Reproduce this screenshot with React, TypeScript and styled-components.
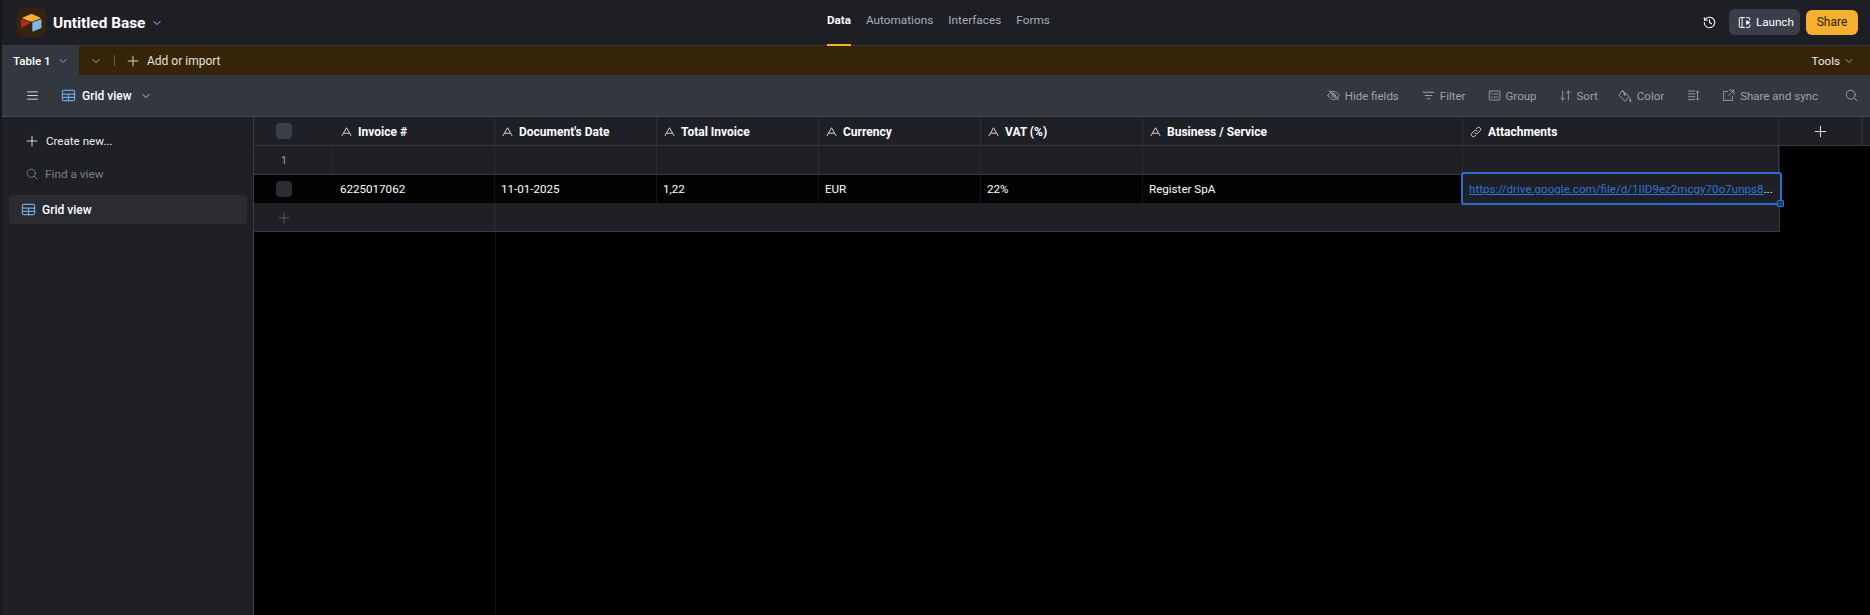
import React from "react";
import styled, { createGlobalStyle } from "styled-components";

const Global = createGlobalStyle`
  html, body { margin: 0; padding: 0; height: 100%; background: #000; }
  #root { height: 100%; }
  * { box-sizing: border-box; }
  body { font-family: Roboto, "Noto Sans", "Liberation Sans", sans-serif; font-size: 13px; color: #fff; overflow: hidden; }
`;

const Page = styled.div`
  width: 1870px;
  height: 615px;
  display: flex;
  flex-direction: column;
  background: #17181c;
  padding-left: 2px;
`;

const TopBar = styled.header`
  height: 46px;
  flex: none;
  display: flex;
  align-items: stretch;
  background: #1d1f25;
  border-bottom: 1px solid #37393f;
  padding: 0 12px 0 15px;
`;
const Brand = styled.div`
  display: flex;
  align-items: center;
  width: 810px;
`;
const LogoBox = styled.div`
  width: 29px;
  height: 29px;
  border-radius: 6px;
  background: #35240b;
  display: flex;
  align-items: center;
  justify-content: center;
`;
const BaseName = styled.span`
  font-size: 15.4px;
  font-weight: 700;
  margin-left: 7px;
`;
const BrandChevron = styled.span`
  display: flex;
  margin-left: 7px;
  color: #d5d7dc;
`;
const Nav = styled.nav`
  display: flex;
  gap: 15px;
`;
const NavItem = styled.a<{ $active?: boolean }>`
  display: flex;
  align-items: center;
  height: 46px;
  padding-bottom: 4px;
  font-size: ${(p) => (p.$active ? "11.6px" : "11.8px")};
  font-weight: ${(p) => (p.$active ? 700 : 400)};
  color: ${(p) => (p.$active ? "#ffffff" : "#a5adbc")};
  border-bottom: 2px solid ${(p) => (p.$active ? "#f5b02f" : "transparent")};
`;
const TopActions = styled.div`
  flex: 1;
  display: flex;
  align-items: center;
  justify-content: flex-end;
  padding-bottom: 1px;
`;
const HistoryBtn = styled.span`
  display: flex;
  color: #fff;
  margin-right: 13px;
`;
const LaunchBtn = styled.button`
  display: flex;
  align-items: center;
  gap: 5px;
  width: 71px;
  height: 26px;
  padding: 0 0 0 9px;
  border: 0;
  border-radius: 6px;
  background: #3b3e4a;
  color: #fff;
  font: 400 11.6px Roboto, sans-serif;
  margin-right: 6px;
`;
const ShareBtn = styled.button`
  width: 52px;
  height: 25px;
  border: 0;
  border-radius: 6px;
  background: #f5b02f;
  color: #2b1d05;
  font: 400 12px Roboto, sans-serif;
  padding: 0;
`;

const TabBar = styled.div`
  height: 29px;
  flex: none;
  display: flex;
  align-items: center;
  background: #352407;
  padding-right: 16px;
`;
const ActiveTab = styled.div`
  width: 77px;
  height: 29px;
  background: #333740;
  display: flex;
  align-items: center;
  padding-left: 11px;
  gap: 7px;
  font-size: 11.6px;
  font-weight: 500;
`;
const DimChevron = styled.span`
  display: flex;
  color: #a8abb3;
`;
const TabMore = styled.span`
  display: flex;
  margin-left: 12px;
  color: #c9c4ba;
`;
const TabDivider = styled.span`
  width: 1px;
  height: 11px;
  background: #6a5c44;
  margin: 0 12px 0 13px;
`;
const AddImport = styled.div`
  display: flex;
  align-items: center;
  gap: 8px;
  font-size: 12px;
  color: #e8e3da;
`;
const Tools = styled.div`
  margin-left: auto;
  display: flex;
  align-items: center;
  gap: 4px;
  font-size: 11.6px;
  color: #f0ece4;
`;

const ViewBar = styled.div`
  height: 42px;
  flex: none;
  display: flex;
  align-items: center;
  background: #333740;
  border-bottom: 1px solid #474a52;
  padding: 0 12px 0 24px;
`;
const Hamburger = styled.span`
  display: flex;
  color: #d5d7dc;
`;
const ViewName = styled.div`
  display: flex;
  align-items: center;
  margin-left: 22px;
  font-size: 12px;
  font-weight: 500;
  gap: 6px;
`;
const ViewChevron = styled.span`
  display: flex;
  margin-left: 9px;
  color: #d5d7dc;
`;
const Tool = styled.div<{ $gap?: number }>`
  display: flex;
  align-items: center;
  gap: 5px;
  font-size: 11.5px;
  color: #9aa3b3;
  margin-left: ${(p) => p.$gap ?? 22}px;
`;
const ToolSpacer = styled.div`
  flex: 1;
`;

const Main = styled.div`
  flex: 1;
  min-height: 0;
  display: flex;
`;
const Sidebar = styled.aside`
  width: 252px;
  flex: none;
  background: #1e2025;
  border-right: 1px solid #3a3c42;
  padding: 0 6px 0 7px;
  display: flex;
  flex-direction: column;
`;
const CreateNew = styled.div`
  height: 48px;
  display: flex;
  align-items: center;
  gap: 8px;
  padding-left: 17px;
  font-size: 11.6px;
  color: #eceef2;
`;
const FindView = styled.div`
  height: 18px;
  display: flex;
  align-items: center;
  gap: 7px;
  padding-left: 17px;
  font-size: 11.8px;
  color: #7d7f86;
`;
const ViewRow = styled.div`
  height: 29px;
  margin-top: 12px;
  display: flex;
  align-items: center;
  gap: 6px;
  padding-left: 12px;
  border-radius: 4px;
  background: #2a2c32;
  font-size: 12px;
  font-weight: 500;
`;

const GridArea = styled.section`
  flex: 1;
  min-width: 0;
  background: #000;
  display: flex;
  flex-direction: column;
  position: relative;
`;
const columns = "79px 162px 162px 162px 162px 162px 320px 316px";
const HeaderRow = styled.div`
  height: 29px;
  flex: none;
  display: grid;
  grid-template-columns: 79px 162px 162px 162px 162px 162px 320px 316px 84px 1fr;
  background: #1e2026;
  border-bottom: 1px solid #37393f;
`;
const HeadBox = styled.div`
  display: flex;
  align-items: center;
  padding-left: 22px;
`;
const HeadCell = styled.div<{ $indent?: number }>`
  display: flex;
  align-items: center;
  gap: 6px;
  padding: 1px 0 0 ${(p) => p.$indent ?? 7}px;
  font-size: 12px;
  font-weight: 700;
  border-right: 1px solid #2d2f35;
`;
const Check = styled.span<{ $dark?: boolean }>`
  width: 16px;
  height: 16px;
  border-radius: 4px;
  background: ${(p) => (p.$dark ? "#2c2d33" : "#3a3e4a")};
`;
const AddColumn = styled.div`
  display: flex;
  align-items: center;
  justify-content: center;
  color: #e6e7ea;
  border-right: 2px solid #2d2f35;
`;
const Body = styled.div`
  flex: none;
  width: 1526px;
`;
const Row = styled.div<{ $dark?: boolean }>`
  height: 29px;
  display: grid;
  grid-template-columns: ${columns};
  background: ${(p) => (p.$dark ? "#030303" : "#1e2026")};
  border-bottom: 1px solid ${(p) => (p.$dark ? "#1e2026" : "#37393f")};
`;
const Cell = styled.div<{ $dark?: boolean; $indent?: number }>`
  display: flex;
  align-items: center;
  padding-left: ${(p) => p.$indent ?? 6}px;
  font-size: 11.6px;
  font-weight: 400;
  color: #fff;
  white-space: nowrap;
  border-right: 1px solid ${(p) => (p.$dark ? "#131417" : "#2a2c31")};
`;
const RowNum = styled(Cell)`
  padding: 0 0 0 27px;
  font-size: 10.5px;
  color: #a5a7ac;
`;
const LastCell = styled(Cell)`
  border-right: 1px solid #37393f;
`;
const AddRow = styled.div`
  height: 28px;
  display: grid;
  grid-template-columns: 241px 1fr;
  background: #1e2026;
  border-bottom: 1px solid #37393f;
  border-right: 1px solid #37393f;
`;
const AddCell = styled.div`
  display: flex;
  align-items: center;
  padding-left: 24px;
  color: #5b5d63;
  border-right: 1px solid #2d2f35;
`;
const FrozenRest = styled.div`
  flex: 1;
  width: 242px;
  border-right: 1px solid #101114;
`;
const ActiveCell = styled.div`
  position: absolute;
  left: 1207px;
  top: 55px;
  width: 321px;
  height: 33px;
  border: 2px solid #2d6cce;
  border-radius: 3px;
  background: #1e2026;
  display: flex;
  align-items: center;
  padding-left: 6px;
  font-size: 11.6px;
  font-weight: 400;
`;
const CellLink = styled.a`
  color: #2f72d8;
  text-decoration: underline;
  white-space: nowrap;
`;
const Ellipsis = styled.span`
  color: #fff;
`;
const Handle = styled.span`
  position: absolute;
  right: -4px;
  bottom: -4px;
  width: 7px;
  height: 7px;
  border: 1px solid #2d6cce;
  border-radius: 1px;
  background: #1e3a66;
`;

type IconProps = { size?: number; color?: string; sw?: number; children: React.ReactNode };
const Svg = ({ size = 16, color = "currentColor", sw = 1.2, children }: IconProps) => (
  <svg width={size} height={size} viewBox="0 0 16 16" fill="none" stroke={color} strokeWidth={sw} strokeLinecap="round" strokeLinejoin="round" style={{ display: "block", flex: "none" }}>
    {children}
  </svg>
);
const Chevron = ({ size = 12 }: { size?: number }) => (
  <Svg size={size} sw={1.4}><path d="M3 5.5 L8 10.5 L13 5.5" /></Svg>
);
const Plus = ({ size = 14 }: { size?: number }) => (
  <Svg size={size} sw={1.2}><path d="M8 1.5 V14.5 M1.5 8 H14.5" /></Svg>
);
const GridIcon = ({ size = 15 }: { size?: number }) => (
  <Svg size={size} color="#6fa8dc" sw={1.2}>
    <rect x="1.5" y="2.5" width="13" height="11" rx="1.5" />
    <path d="M1.5 6.5 H14.5 M1.5 10 H14.5 M8 6.5 V13.5" />
  </Svg>
);
const TextIcon = () => (
  <Svg size={11} color="#e8e9ec" sw={1.3}><path d="M1.5 14 L8 2.5 L14.5 14 M4.5 10.5 H11.5" /></Svg>
);
const LinkIcon = () => (
  <Svg size={12} color="#d0d2d6" sw={1.2}>
    <path d="M6.5 9.5 a2.8 2.8 0 0 0 4 0 l3 -3 a2.8 2.8 0 0 0 -4 -4 l-1.2 1.2" />
    <path d="M9.5 6.5 a2.8 2.8 0 0 0 -4 0 l-3 3 a2.8 2.8 0 0 0 4 4 l1.2 -1.2" />
  </Svg>
);
const SearchIcon = ({ size = 13 }: { size?: number }) => (
  <Svg size={size} sw={1.2}><circle cx="7" cy="7" r="5.5" /><path d="M11 11 L14.5 14.5" /></Svg>
);
const Logo = () => (
  <svg width="21" height="18" viewBox="0 0 200 170" style={{ display: "block" }}>
    <path fill="#f5b02f" d="M90 2 L18 32 c-4 2 -4 7 0 9 L90 70 c6 2 14 2 20 0 L182 41 c4 -2 4 -7 0 -9 L110 2 c-6 -3 -14 -3 -20 0z" />
    <path fill="#7db9ea" d="M108 85 V160 c0 4 4 7 8 5 L190 136 c3 -1 5 -4 5 -7 V55 c0 -4 -4 -7 -8 -5 L113 78 c-3 1 -5 4 -5 7z" />
    <path fill="#b02a2a" d="M90 88 L66 100 L10 128 c-4 2 -10 -1 -10 -5 V52 c0 -2 1 -3 2 -4 c1 -1 3 -1 4 0 L90 80 c3 2 3 6 0 8z" />
  </svg>
);

const headers = ["Document's Date", "Total Invoice", "Currency", "VAT (%)", "Business / Service"];

export default function App() {
  return (
    <Page>
      <Global />
      <TopBar>
        <Brand>
          <LogoBox><Logo /></LogoBox>
          <BaseName>Untitled Base</BaseName>
          <BrandChevron><Chevron size={10} /></BrandChevron>
        </Brand>
        <Nav>
          <NavItem $active>Data</NavItem>
          <NavItem>Automations</NavItem>
          <NavItem>Interfaces</NavItem>
          <NavItem>Forms</NavItem>
        </Nav>
        <TopActions>
          <HistoryBtn>
            <Svg size={13} sw={1.3}>
              <path d="M2.2 5 A6.5 6.5 0 1 1 1.5 8" />
              <path d="M1.5 2 L2 5.2 L5.2 5" />
              <path d="M8 4.5 V8 L10.5 9.5" />
            </Svg>
          </HistoryBtn>
          <LaunchBtn>
            <Svg size={13} sw={1.2}>
              <path d="M8 2 H2.5 A1 1 0 0 0 1.5 3 V13 A1 1 0 0 0 2.5 14 H8" />
              <path d="M5 2 V14 M10.5 2 H13.5 A1 1 0 0 1 14.5 3 V5 M14.5 11 V13 A1 1 0 0 1 13.5 14 H10.5" />
              <path d="M11 6 L14.5 8 L11 10 Z" fill="#fff" />
            </Svg>
            Launch
          </LaunchBtn>
          <ShareBtn>Share</ShareBtn>
        </TopActions>
      </TopBar>

      <TabBar>
        <ActiveTab>Table 1<DimChevron><Chevron size={10} /></DimChevron></ActiveTab>
        <TabMore><Chevron size={10} /></TabMore>
        <TabDivider />
        <AddImport><Plus size={12} />Add or import</AddImport>
        <Tools>Tools<DimChevron><Chevron size={10} /></DimChevron></Tools>
      </TabBar>

      <ViewBar>
        <Hamburger>
          <Svg size={13} sw={1.2}><path d="M2 3.5 H14 M2 8 H14 M2 12.5 H14" /></Svg>
        </Hamburger>
        <ViewName>
          <GridIcon />
          Grid view
        </ViewName>
        <ViewChevron><Chevron size={10} /></ViewChevron>
        <ToolSpacer />
        <Tool>
          <Svg size={13} sw={1.1}>
            <path d="M1 8 C3 4.5 5.5 3 8 3 C10.5 3 13 4.5 15 8 C13 11.5 10.5 13 8 13 C5.5 13 3 11.5 1 8z" />
            <circle cx="8" cy="8" r="2.3" />
            <path d="M2.5 2.5 L13.5 13.5 M4 2 L14.5 12.5" />
          </Svg>
          Hide fields
        </Tool>
        <Tool $gap={23}>
          <Svg size={13} sw={1.2}><path d="M1.5 4 H14.5 M4 8 H12 M6.5 12 H9.5" /></Svg>
          Filter
        </Tool>
        <Tool $gap={22}>
          <Svg size={13} sw={1.1}>
            <rect x="1.5" y="2.5" width="13" height="11" rx="1" />
            <path d="M4 6 H5 M7 6 H12 M4 10 H5 M7 10 H12" />
          </Svg>
          Group
        </Tool>
        <Tool $gap={22}>
          <Svg size={13} sw={1.1}>
            <path d="M4.5 2.5 V13.5 M2 11 L4.5 13.5 L7 11" />
            <path d="M11.5 13.5 V2.5 M9 5 L11.5 2.5 L14 5" />
          </Svg>
          Sort
        </Tool>
        <Tool $gap={20}>
          <Svg size={14} sw={1.1}>
            <path d="M5.5 2 L13 9 L8 14 L1.5 7.5 Z" />
            <path d="M5 1.5 L7.5 6" />
            <circle cx="7.5" cy="6.5" r="0.8" />
            <path d="M14 11.5 C13 13 13 14.2 14 14.5 C15 14.2 15 13 14 11.5z" />
          </Svg>
          Color
        </Tool>
        <Tool $gap={23}>
          <Svg size={13} sw={1.1}>
            <path d="M1.5 2.5 H9.5 M1.5 6 H9.5 M1.5 9.5 H9.5 M1.5 13 H9.5" />
            <path d="M13 2.5 V13.5 M11.5 4 L13 2.5 L14.5 4 M11.5 12 L13 13.5 L14.5 12" />
          </Svg>
        </Tool>
        <Tool $gap={22}>
          <Svg size={13} sw={1.1}>
            <path d="M7 3 H2 V14 H13 V9" />
            <path d="M9.5 1.5 H14.5 V6.5 M14.5 1.5 L8 8" />
          </Svg>
          Share and sync
        </Tool>
        <Tool $gap={27}><SearchIcon /></Tool>
      </ViewBar>

      <Main>
        <Sidebar>
          <CreateNew><Plus size={12} />Create new...</CreateNew>
          <FindView><SearchIcon size={12} />Find a view</FindView>
          <ViewRow><GridIcon />Grid view</ViewRow>
        </Sidebar>
        <GridArea>
          <HeaderRow>
            <HeadBox><Check /></HeadBox>
            <HeadCell $indent={8}><TextIcon />Invoice #</HeadCell>
            {headers.map((h) => (
              <HeadCell key={h}><TextIcon />{h}</HeadCell>
            ))}
            <HeadCell><LinkIcon />Attachments</HeadCell>
            <AddColumn><Plus size={13} /></AddColumn>
          </HeaderRow>
          <Body>
            <Row>
              <RowNum>1</RowNum>
              <Cell /><Cell /><Cell /><Cell /><Cell /><Cell />
              <LastCell />
            </Row>
            <Row $dark>
              <HeadBox><Check $dark /></HeadBox>
              <Cell $dark $indent={7}>6225017062</Cell>
              <Cell $dark>11-01-2025</Cell>
              <Cell $dark>1,22</Cell>
              <Cell $dark>EUR</Cell>
              <Cell $dark>22%</Cell>
              <Cell $dark>Register SpA</Cell>
              <LastCell />
            </Row>
            <AddRow>
              <AddCell><Plus size={12} /></AddCell>
              <div />
            </AddRow>
          </Body>
          <FrozenRest />
          <ActiveCell>
            <CellLink>https://drive.google.com/file/d/1IID9ez2mcgy70o7unps8</CellLink>
            <Ellipsis>...</Ellipsis>
            <Handle />
          </ActiveCell>
        </GridArea>
      </Main>
    </Page>
  );
}
